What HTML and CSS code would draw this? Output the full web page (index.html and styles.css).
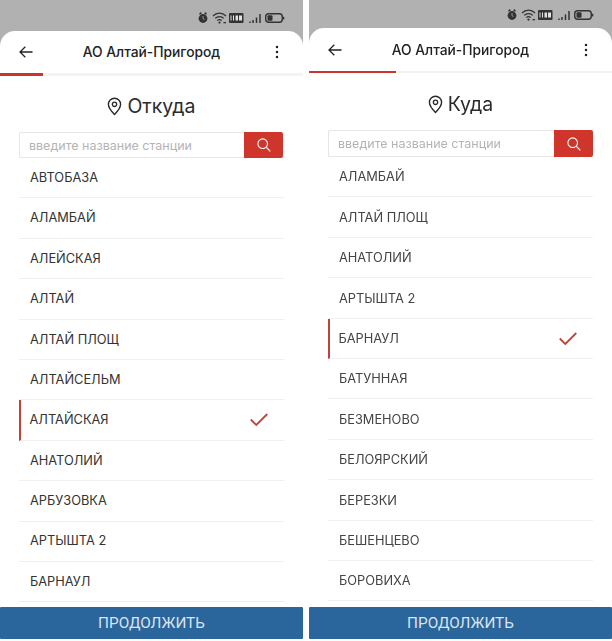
FILE: index.html
```html
<!DOCTYPE html>
<html lang="ru">
<head>
<meta charset="utf-8">
<title>АО Алтай-Пригород</title>
<link rel="stylesheet" href="styles.css">
</head>
<body>
<svg class="defs" width="0" height="0" aria-hidden="true">
  <symbol id="status" viewBox="0 0 88 14">
    <path d="M1.500 3.200 3.300 1.600M8.500 3.200 6.700 1.600" stroke="#333" stroke-width="1.500" fill="none"/>
    <circle cx="5" cy="7.500" r="4.400" fill="#333"/>
    <path d="M5 5v2.700l1.500.9" stroke="#b1b1b1" stroke-width=".8" fill="none"/>
    <path d="M15 5a9 9 0 0 1 13 0M17.200 7.400a6 6 0 0 1 8.600 0M19.300 9.600a3 3 0 0 1 4.400 0" stroke="#333" stroke-width="1.200" fill="none"/>
    <circle cx="21.500" cy="11.600" r="1.100" fill="#333"/>
    <rect x="25.500" y="11" width="2.500" height="1.300" fill="#333"/>
    <rect x="31" y="2" width="14.500" height="10" rx="1" fill="#333"/>
    <rect x="32.500" y="4.500" width="1" height="5" fill="#e2e2e2"/><rect x="35" y="4.500" width="1" height="5" fill="#e2e2e2"/><rect x="37.500" y="4.500" width="2.500" height="5" fill="#e2e2e2"/><rect x="41" y="4.500" width="3" height="5" fill="#e2e2e2"/>
    <path d="M52 10.500v1.500M55 9v3M58.500 6.500v5.500M62 3v9" stroke="#333" stroke-width="1.500"/>
    <rect x="67.700" y="2.700" width="16.600" height="8.600" rx="3" fill="none" stroke="#333" stroke-width="1.400"/>
    <rect x="69.500" y="4.300" width="5" height="5.400" rx="1" fill="#333"/>
    <rect x="85" y="5.800" width="1.300" height="2.600" fill="#333"/>
  </symbol>
  <symbol id="back" viewBox="0 0 14 12">
    <path d="M13.500 6H1M6.300.8 1 6l5.300 5.200" fill="none" stroke="#222" stroke-width="1.300"/>
  </symbol>
  <symbol id="more" viewBox="0 0 4 14">
    <circle cx="2" cy="2" r="1.250" fill="#222"/><circle cx="2" cy="7" r="1.250" fill="#222"/><circle cx="2" cy="12" r="1.250" fill="#222"/>
  </symbol>
  <symbol id="pin" viewBox="0 0 16 20">
    <path d="M8 1.200a6.500 6.500 0 0 0-6.500 6.500C1.500 12 8 18.600 8 18.600s6.500-6.600 6.500-10.900A6.500 6.500 0 0 0 8 1.200Z" fill="none" stroke="#2b2b2b" stroke-width="1.500"/>
    <circle cx="8" cy="7.700" r="2.300" fill="none" stroke="#2b2b2b" stroke-width="1.400"/>
  </symbol>
  <symbol id="search" viewBox="0 0 14 14">
    <circle cx="5.700" cy="5.700" r="4.800" fill="none" stroke="#fff" stroke-width="1.100"/>
    <path d="M9.200 9.200 13.300 13.300" stroke="#fff" stroke-width="1.200"/>
  </symbol>
  <symbol id="check" viewBox="0 0 18 13">
    <path d="M.8 6.500 6.300 12 17.300 1" fill="none" stroke="#c0433b" stroke-width="1.800"/>
  </symbol>
</svg>
<main class="screens">
  <section class="phone phone-from">
    <div class="statusbar"><svg class="status-icons"><use href="#status"/></svg></div>
    <div class="card">
      <header class="appbar">
        <svg class="icon-back"><use href="#back"/></svg>
        <h1 class="appbar-title">АО Алтай-Пригород</h1>
        <svg class="icon-more"><use href="#more"/></svg>
      </header>
      <div class="progress"><div class="progress-fill"></div></div>
      <h2 class="heading"><svg class="icon-pin"><use href="#pin"/></svg>Откуда</h2>
      <div class="search">
        <div class="search-input">введите название станции</div>
        <div class="search-btn"><svg class="icon-search"><use href="#search"/></svg></div>
      </div>
      <ul class="stations">
        <li class="station">АВТОБАЗА</li>
        <li class="station">АЛАМБАЙ</li>
        <li class="station">АЛЕЙСКАЯ</li>
        <li class="station">АЛТАЙ</li>
        <li class="station">АЛТАЙ ПЛОЩ</li>
        <li class="station">АЛТАЙСЕЛЬМ</li>
        <li class="station is-selected">АЛТАЙСКАЯ<svg class="icon-check"><use href="#check"/></svg></li>
        <li class="station">АНАТОЛИЙ</li>
        <li class="station">АРБУЗОВКА</li>
        <li class="station">АРТЫШТА 2</li>
        <li class="station">БАРНАУЛ</li>
      </ul>
      <button class="continue" type="button">ПРОДОЛЖИТЬ</button>
    </div>
  </section>
  <section class="phone phone-to">
    <div class="statusbar"><svg class="status-icons"><use href="#status"/></svg></div>
    <div class="card">
      <header class="appbar">
        <svg class="icon-back"><use href="#back"/></svg>
        <h1 class="appbar-title">АО Алтай-Пригород</h1>
        <svg class="icon-more"><use href="#more"/></svg>
      </header>
      <div class="progress"><div class="progress-fill"></div></div>
      <h2 class="heading"><svg class="icon-pin"><use href="#pin"/></svg>Куда</h2>
      <div class="search">
        <div class="search-input">введите название станции</div>
        <div class="search-btn"><svg class="icon-search"><use href="#search"/></svg></div>
      </div>
      <ul class="stations">
        <li class="station">АЛАМБАЙ</li>
        <li class="station">АЛТАЙ ПЛОЩ</li>
        <li class="station">АНАТОЛИЙ</li>
        <li class="station">АРТЫШТА 2</li>
        <li class="station is-selected">БАРНАУЛ<svg class="icon-check"><use href="#check"/></svg></li>
        <li class="station">БАТУННАЯ</li>
        <li class="station">БЕЗМЕНОВО</li>
        <li class="station">БЕЛОЯРСКИЙ</li>
        <li class="station">БЕРЕЗКИ</li>
        <li class="station">БЕШЕНЦЕВО</li>
        <li class="station">БОРОВИХА</li>
      </ul>
      <button class="continue" type="button">ПРОДОЛЖИТЬ</button>
    </div>
  </section>
</main>
</body>
</html>
```
FILE: styles.css
```css
* { box-sizing: border-box; }
html, body { margin: 0; padding: 0; height: 100%; background: #fff; }
body { overflow: hidden; font-family: "Inter", "Liberation Sans", sans-serif; color: #2b2b2b; }
.defs { display: block; height: 0; }
.screens { display: grid; grid-template-columns: 303px 303px; gap: 6px; height: 641px; filter: blur(0.35px); }
.phone { display: flex; flex-direction: column; background: #b1b1b1; height: 641px; overflow: hidden; }
.statusbar { display: flex; justify-content: flex-end; align-items: flex-end; height: 30.500px; padding: 0 17px 6px 0; }
.phone-to .statusbar { height: 28px; padding: 0 17px 6px 0; }
.status-icons { width: 88px; height: 14px; }
.card { flex: 1; min-height: 0; display: flex; flex-direction: column; background: #fff; border-radius: 15px 15px 0 0; }
.appbar { display: grid; grid-template-columns: 1fr auto 1fr; align-items: center; height: 42px; flex: none; padding: 0 19px; }
.phone-to .appbar { height: 43px; }
.icon-back { width: 14px; height: 12px; }
.icon-more { width: 4px; height: 14px; justify-self: end; margin-right: 5px; }
.appbar-title { margin: 0; font-size: 13.800px; font-weight: 500; color: #222; }
.progress { height: 3px; flex: none; background: #f3f3f3; }
.phone-to .progress { height: 2px; }
.progress-fill { width: 43px; height: 100%; background: #c9362d; }
.phone-to .progress-fill { width: 87px; }
.heading { display: flex; align-items: center; justify-content: center; gap: 5px; height: 56.500px; padding-top: 5px; flex: none; margin: 0; font-size: 19.500px; font-weight: 400; color: #2b2b2b; }
.phone-to .heading { height: 57px; }
.icon-pin { width: 15px; height: 19px; }
.search { display: flex; flex: none; height: 26px; margin: 0 20px 0 19px; }
.phone-to .search { height: 27px; margin-right: 19px; }
.search-input { flex: 1; display: flex; align-items: center; padding-left: 9px; border: 1px solid #e6e6e6; border-right: 0; border-radius: 2px 0 0 2px; font-size: 12.500px; color: #b4b4b4; }
.search-btn { width: 39px; display: flex; align-items: center; justify-content: center; background: #d0352b; border-radius: 0 2px 2px 0; }
.icon-search { width: 14px; height: 14px; }
.stations { list-style: none; flex: 1; min-height: 0; overflow: hidden; margin: 0 19px; padding: 0; }
.station { position: relative; display: flex; align-items: center; justify-content: space-between; height: 40.400px; padding: 0 16px 0.500px 11px; border-bottom: 1px solid #f0f0f0; font-size: 12.800px; color: #333; }
.phone-to .station { color: #444; padding-top: 0.500px; padding-bottom: 0; }
.station.is-selected { border-left: 2.500px solid #c0433b; padding-left: 8.500px; }
.icon-check { width: 18px; height: 13px; }
.continue { flex: none; height: 32px; margin: 0 0 2px; border: 0; background: #2a659c; color: #d9e4ee; font-family: "Roboto", sans-serif; font-size: 15.300px; border-radius: 1px; }
```
